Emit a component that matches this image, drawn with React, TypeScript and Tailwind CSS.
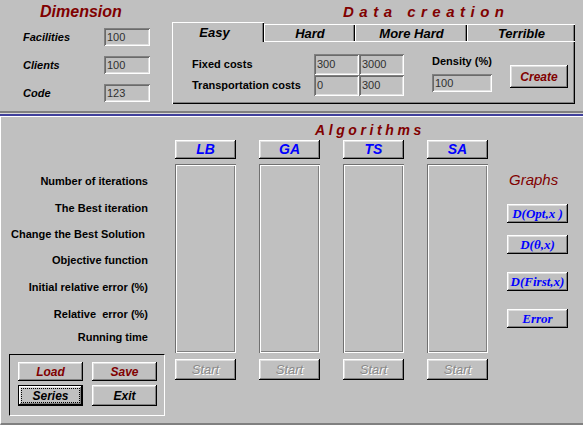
import React from "react";

const raised =
  "shadow-[inset_-1px_-1px_0_#000000,inset_1px_1px_0_#ffffff,inset_-2px_-2px_0_#808080,inset_2px_2px_0_#dfdfdf]";
const sunken =
  "shadow-[inset_1px_1px_0_#808080,inset_-1px_-1px_0_#ffffff,inset_2px_2px_0_#6a6a6a,inset_-2px_-2px_0_#dfdfdf]";
const groove =
  "shadow-[inset_1px_1px_0_#707070,inset_-1px_-1px_0_#ffffff,inset_2px_2px_0_#ffffff,inset_-2px_-2px_0_#808080]";

function Field({ value, className }: { value: string; className: string }) {
  return (
    <div
      className={`${sunken} ${className} flex items-center pl-[3px] text-[11px] text-[#303030] leading-none`}
    >
      {value}
    </div>
  );
}

function Tab({ label, w }: { label: string; w: string }) {
  return (
    <div
      className={`${w} h-[18px] border-t border-l border-b border-white shadow-[inset_-1px_0_0_#000000,inset_-2px_0_0_#808080] flex items-center justify-center text-[13px] font-bold italic text-black leading-none`}
    >
      {label}
    </div>
  );
}

const labels: [string, string][] = [
  ["Number of iterations", "mt-[34px]"],
  ["The Best iteration", "mt-[13px]"],
  ["Change the Best Solution ", "mt-[12px]"],
  ["Objective function", "mt-[12px]"],
  ["Initial relative error (%)", "mt-[13px]"],
  ["Relative  error (%)", "mt-[13px]"],
  ["Running time", "mt-[9px]"],
];

const algs = ["LB", "GA", "TS", "SA"];

export default function App() {
  return (
    <div className="w-[583px] h-[425px] bg-[#c0c0c0] overflow-hidden flex flex-col font-['Liberation_Sans',Arial,sans-serif] text-black">
      {/* Top section */}
      <div className="h-[111px] flex">
        {/* Dimension */}
        <div className="w-[172px] flex flex-col">
          <div className="h-[28px] pt-[3px] pl-[40px]">
            <div className="text-[16px] leading-[18px] font-bold italic text-[#800000]">Dimension</div>
          </div>
          <div className="flex flex-col gap-[10px]">
            {[
              ["Facilities", "100"],
              ["Clients", "100"],
              ["Code", "123"],
            ].map(([l, v]) => (
              <div key={l} className="flex items-center h-[18px]">
                <div className="w-[104px] pl-[23px] text-[11px] font-bold italic leading-none">{l}</div>
                <Field value={v} className="w-[46px] h-[18px]" />
              </div>
            ))}
          </div>
        </div>

        {/* Data creation */}
        <div className="flex-1 flex flex-col">
          <div className="h-[22px] pt-[3px] pl-[171px]">
            <div className="text-[15px] leading-[18px] font-bold italic tracking-[5.5px] text-[#800000] whitespace-nowrap">
              Data creation
            </div>
          </div>
          <div className="flex items-end h-[20px] w-[403px]">
            <div className="w-[92px] h-[20px] border-t border-l border-white shadow-[inset_-1px_0_0_#000000,inset_-2px_0_0_#808080] flex items-center justify-center pr-[8px] text-[13px] font-bold italic leading-none">
              Easy
            </div>
            <Tab label="Hard" w="w-[91px]" />
            <Tab label="More Hard" w="w-[112px]" />
            <Tab label="Terrible" w="w-[108px]" />
          </div>
          <div className="w-[403px] h-[62px] border-l border-white shadow-[inset_-1px_-1px_0_#000000,inset_-2px_-2px_0_#808080] pt-[12px] pl-[19px] flex items-start">
            <div className="w-[122px] flex flex-col text-[11px] font-bold leading-none">
              <div className="h-[21px] flex items-center">Fixed costs</div>
              <div className="h-[21px] flex items-center">Transportation costs</div>
            </div>
            <div className="grid grid-cols-[45px_45px]">
              <Field value="300" className="h-[21px]" />
              <Field value="3000" className="h-[21px]" />
              <Field value="0" className="h-[21px]" />
              <Field value="300" className="h-[21px]" />
            </div>
            <div className="ml-[28px] flex flex-col">
              <div className="h-[14px] leading-[14px] text-[11px] font-bold whitespace-nowrap">Density (%)</div>
              <Field value="100" className="mt-[6px] w-[60px] h-[18px]" />
            </div>
            <div
              className={`${raised} ml-[18px] mt-[11px] w-[58px] h-[23px] flex items-center justify-center text-[12px] font-bold italic text-[#800000]`}
            >
              Create
            </div>
          </div>
        </div>
      </div>

      {/* Separator */}
      <div className="h-[2px] bg-[#808080]" />
      <div className="h-[1px] bg-[#dadada]" />
      <div className="h-[2px] bg-[#40409c]" />
      <div className="h-[1px] bg-white" />

      {/* Lower section */}
      <div className="h-[308px] border-l border-white border-b-2 border-b-[#808080] flex flex-col">
        <div className="h-[23px] pt-[5px] pl-[314px]">
          <div className="text-[14px] leading-[16px] font-bold italic tracking-[3.6px] text-[#800000]">Algorithms</div>
        </div>
        <div className="flex">
          <div className="w-[174px] flex flex-col">
            <div className="flex flex-col items-end pr-[27px]">
              {labels.map(([t, m]) => (
                <div key={t} className={`${m} h-[14px] leading-[14px] text-[11px] font-bold whitespace-pre`}>
                  {t}
                </div>
              ))}
            </div>
            <div className="mt-[10px] ml-[8px] w-[156px] h-[62px] border-t border-l border-black border-r border-b border-r-white border-b-white pt-[7px] pl-[8px]">
              <div className="grid grid-cols-[65px_65px] gap-x-[9px] gap-y-[4px]">
                <div className={`${raised} h-[19px] flex items-center justify-center text-[12px] font-bold italic text-[#800000]`}>
                  Load
                </div>
                <div className={`${raised} h-[19px] flex items-center justify-center text-[12px] font-bold italic text-[#800000]`}>
                  Save
                </div>
                <div className="h-[21px] border border-black">
                  <div className={`${raised} h-full p-[2px]`}>
                    <div className="h-full border border-dotted border-black flex items-center justify-center text-[12px] font-bold italic">
                      Series
                    </div>
                  </div>
                </div>
                <div className={`${raised} h-[21px] flex items-center justify-center text-[12px] font-bold italic`}>
                  Exit
                </div>
              </div>
            </div>
          </div>

          <div className="flex gap-[23px]">
            {algs.map((a) => (
              <div key={a} className="w-[61px] flex flex-col">
                <div className={`${raised} h-[19px] flex items-center justify-center text-[14px] font-bold italic text-[#0000ff]`}>
                  {a}
                </div>
                <div className={`${groove} mt-[5px] h-[189px]`} />
                <div
                  className={`${raised} mt-[6px] h-[21px] flex items-center justify-center text-[13px] italic text-[#8a8a8a] [text-shadow:1px_1px_0_#ffffff]`}
                >
                  Start
                </div>
              </div>
            ))}
          </div>

          <div className="ml-[19px] w-[61px] flex flex-col font-['Liberation_Serif',serif]">
            <div className="mt-[31px] h-[18px] leading-[18px] text-[15px] italic text-[#800000] font-['Liberation_Sans',Arial,sans-serif] pl-[2px]">
              Graphs
            </div>
            <div className={`${raised} mt-[15px] h-[19px] flex items-center justify-center text-[13px] font-bold italic text-[#0000ff] whitespace-pre`}>
              D(Opt,x )
            </div>
            <div className={`${raised} mt-[12px] h-[19px] flex items-center justify-center text-[13px] font-bold italic text-[#0000ff]`}>
              D(θ,x)
            </div>
            <div className={`${raised} mt-[18px] h-[19px] flex items-center justify-center text-[13px] font-bold italic text-[#0000ff]`}>
              D(First,x)
            </div>
            <div className={`${raised} mt-[18px] h-[19px] flex items-center justify-center text-[13px] font-bold italic text-[#0000ff]`}>
              Error
            </div>
          </div>
        </div>
      </div>
    </div>
  );
}
